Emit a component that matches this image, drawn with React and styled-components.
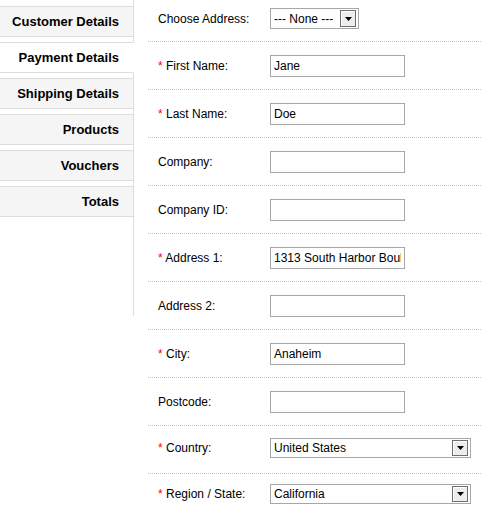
import React from "react";
import styled, { createGlobalStyle } from "styled-components";

const Global = createGlobalStyle`
  html, body { margin: 0; padding: 0; background: #fff; }
  body { font-family: "Liberation Sans", Arial, sans-serif; font-size: 12px; color: #000; }
`;

const Page = styled.div`
  display: flex;
  align-items: flex-start;
  width: 481px;
  overflow: hidden;
`;

const Sidebar = styled.nav`
  box-sizing: border-box;
  width: 134px;
  min-height: 316px;
  padding-top: 6px;
  border-right: 1px solid #dddddd;
  display: flex;
  flex-direction: column;
  flex-shrink: 0;
`;

const Tab = styled.a`
  box-sizing: border-box;
  height: 31px;
  margin-bottom: 5px;
  display: flex;
  align-items: center;
  justify-content: flex-end;
  border-top: 1px solid #dddddd;
  border-bottom: 1px solid #dddddd;
  background: ${(p) => (p.$selected ? "#ffffff" : "#f5f5f5")};
  margin-right: ${(p) => (p.$selected ? "-1px" : "0")};
  border-right: ${(p) => (p.$selected ? "1px solid #ffffff" : "none")};
  padding-right: 14px;
  font-family: "Liberation Sans", Arial, sans-serif;
  font-size: 13px;
  font-weight: bold;
  color: #000;
  text-decoration: none;
  white-space: nowrap;
`;

const Content = styled.div`
  flex: 1;
  margin-left: 14px;
  min-width: 0;
`;

const Row = styled.div`
  box-sizing: border-box;
  height: ${(p) => (p.$first ? "42px" : "48px")};
  padding-top: ${(p) => (p.$first ? "0" : "1px")};
  padding-bottom: ${(p) => (p.$first ? "4px" : `${p.$lift || 0}px`)};
  display: grid;
  grid-template-columns: 122px 1fr;
  align-items: center;
  border-bottom: 1px dotted #c4c4c4;
`;

const Label = styled.div`
  padding-left: 10px;
  font-size: 12px;
  white-space: nowrap;
`;

const Required = styled.span`
  color: #ff0000;
`;

const TextInput = styled.input`
  box-sizing: border-box;
  width: 135px;
  height: 22px;
  margin: 0;
  padding: 0 3px;
  border: 1px solid #a7a7a7;
  font-family: "Liberation Sans", Arial, sans-serif;
  font-size: 12px;
  color: #000;
  background: #fff;
  outline: none;
`;

const SelectBox = styled.div`
  box-sizing: border-box;
  width: ${(p) => p.$width}px;
  height: ${(p) => p.$height || 21}px;
  border: 1px solid #a7a7a7;
  display: flex;
  align-items: center;
  justify-content: space-between;
  padding: 0 2px 0 3px;
  background: #fff;
  font-size: 12px;
  white-space: nowrap;
`;

const DropButton = styled.span`
  box-sizing: border-box;
  width: 16px;
  height: ${(p) => p.$height || 16}px;
  border: 1px solid #6f6f6f;
  background: #ededed;
  box-shadow: inset 1px 1px 0 #ffffff;
  display: flex;
  align-items: center;
  justify-content: center;
  flex-shrink: 0;
`;

const Select = ({ value, width, height }) => (
  <SelectBox $width={width} $height={height}>
    <span>{value}</span>
    <DropButton $height={height ? height - 4 : 17}>
      <svg width="7" height="4" viewBox="0 0 7 4">
        <path d="M0 0 H7 L3.5 4 Z" fill="#000" />
      </svg>
    </DropButton>
  </SelectBox>
);

const tabs = [
  "Customer Details",
  "Payment Details",
  "Shipping Details",
  "Products",
  "Vouchers",
  "Totals",
];

const fields = [
  { label: "First Name:", req: true, value: "Jane" },
  { label: "Last Name:", req: true, value: "Doe" },
  { label: "Company:", value: "" },
  { label: "Company ID:", value: "" },
  { label: "Address 1:", req: true, value: "1313 South Harbor Boulevard" },
  { label: "Address 2:", value: "" },
  { label: "City:", req: true, value: "Anaheim" },
  { label: "Postcode:", value: "" },
];

export default function App() {
  return (
    <>
      <Global />
      <Page>
        <Sidebar>
          {tabs.map((t) => (
            <Tab key={t} href="#" $selected={t === "Payment Details"}>
              {t}
            </Tab>
          ))}
        </Sidebar>
        <Content>
          <Row $first>
            <Label>Choose Address:</Label>
            <div>
              <Select value="--- None ---" width={89} height={21} />
            </div>
          </Row>
          {fields.map((f) => (
            <Row key={f.label}>
              <Label>
                {f.req && <Required>* </Required>}
                {f.label}
              </Label>
              <div>
                <TextInput type="text" defaultValue={f.value} readOnly />
              </div>
            </Row>
          ))}
          <Row $lift={4}>
            <Label>
              <Required>* </Required>Country:
            </Label>
            <div>
              <Select value="United States" width={201} height={20} />
            </div>
          </Row>
          <Row $lift={8}>
            <Label>
              <Required>* </Required>Region / State:
            </Label>
            <div>
              <Select value="California" width={201} height={20} />
            </div>
          </Row>
        </Content>
      </Page>
    </>
  );
}
